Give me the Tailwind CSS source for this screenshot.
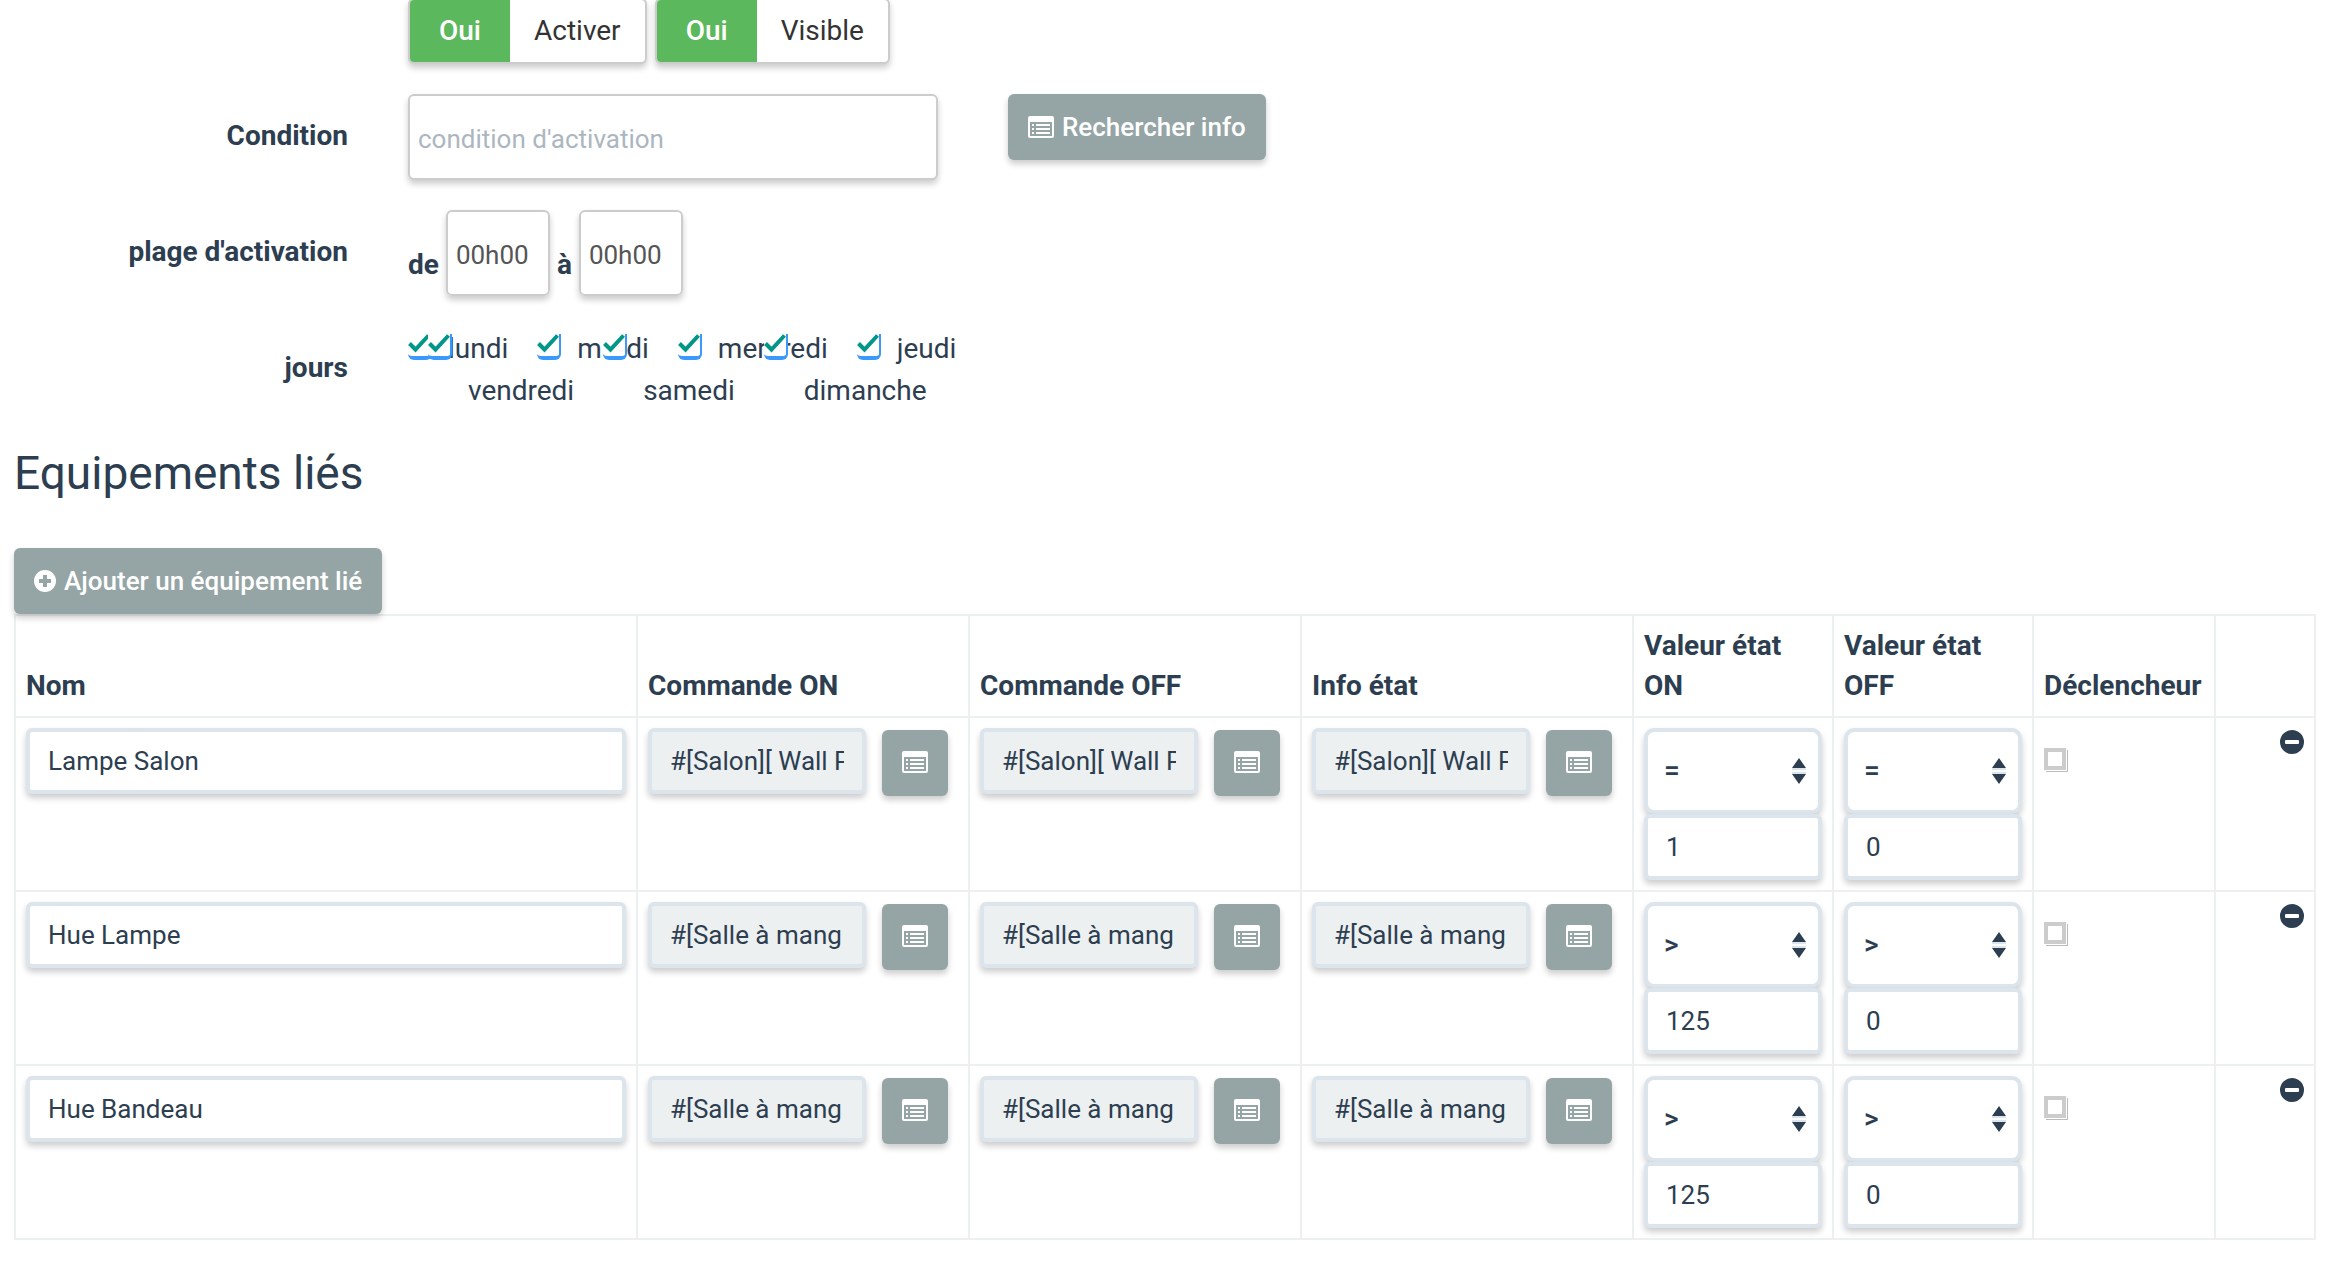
<!DOCTYPE html>
<html lang="fr">
<head>
<meta charset="utf-8">
<title>Equipements liés</title>
<script src="https://cdn.jsdelivr.net/npm/@tailwindcss/browser@4"></script>
</head>
<body class="bg-white font-['Roboto',sans-serif] text-[28px] leading-10 text-[#2c3e50] overflow-x-hidden">
<svg class="hidden" aria-hidden="true">
  <symbol id="list" viewBox="0 0 26 22"><path fill="currentColor" fill-rule="evenodd" d="M2 0H24Q26 0 26 2V20Q26 22 24 22H2Q0 22 0 20V2Q0 0 2 0ZM2 6V20H24V6ZM4 8H6V10H4ZM8 8H22V10H8ZM4 12H6V14H4ZM8 12H22V14H8ZM4 16H6V18H4ZM8 16H22V18H8Z"/></symbol>
  <symbol id="plus" viewBox="0 0 22 22"><path fill="currentColor" fill-rule="evenodd" d="M11 0A11 11 0 1 1 11 22A11 11 0 1 1 11 0ZM9 5V9H5V13H9V17H13V13H17V9H13V5Z"/></symbol>
  <symbol id="minus" viewBox="0 0 24 24"><path fill="currentColor" fill-rule="evenodd" d="M12 0A12 12 0 1 1 12 24A12 12 0 1 1 12 0ZM6 10Q5 10 5 11V13Q5 14 6 14H18Q19 14 19 13V11Q19 10 18 10Z"/></symbol>
  <symbol id="check" viewBox="0 0 24 20"><path fill="none" stroke="#009688" stroke-width="4" d="M1.500 9.500L7.500 15.500L20.500 1.500"/></symbol>
  <symbol id="sort" viewBox="0 0 14 26"><path fill="#2c3e50" d="M7 0L14 10H0ZM0 16H14L7 26Z"/><path fill="#dce4ec" d="M0 10H14V12H0ZM0 14H14V16H0Z"/></symbol>
</svg>

<main class="pl-[14px] pr-5">
  <form class="-mt-[2px] mb-9 flex flex-col gap-[30px]">
    <div class="flex gap-2 pl-[394px]">
      <button type="button" aria-pressed="true" class="flex h-[66px] overflow-hidden rounded-md border-2 border-[#ccc] bg-white leading-[62px] shadow-[0_4px_6px_rgba(0,0,0,0.2)]">
        <span class="w-[100px] bg-[#5cb85c] font-medium text-white">Oui</span><span class="px-6 text-[#333]">Activer</span>
      </button>
      <button type="button" aria-pressed="true" class="flex h-[66px] overflow-hidden rounded-md border-2 border-[#ccc] bg-white leading-[62px] shadow-[0_4px_6px_rgba(0,0,0,0.2)]">
        <span class="w-[100px] bg-[#5cb85c] font-medium text-white">Oui</span><span class="px-6 text-[#333]">Visible</span>
      </button>
    </div>

    <div class="flex items-start">
      <label for="condition" class="mr-[60px] w-[334px] pt-[22px] text-right font-bold">Condition</label>
      <input id="condition" type="text" placeholder="condition d'activation" class="mr-[70px] h-[86px] w-[530px] rounded-md border-2 border-[#ccc] bg-white px-2 pt-1 text-[26px] shadow-[0_4px_6px_rgba(0,0,0,0.2)] placeholder:text-[#acb6c0]">
      <button type="button" class="flex h-[66px] items-center gap-2 rounded-md bg-[#95a5a6] px-5 text-[26px] font-medium text-white shadow-[0_4px_6px_rgba(0,0,0,0.2)]"><svg class="h-[22px] w-[26px]"><use href="#list"/></svg>Rechercher info</button>
    </div>

    <div class="flex items-start">
      <label for="start" class="mr-[60px] w-[334px] pt-[22px] text-right font-bold">plage d'activation</label>
      <div class="flex items-center gap-[7px]">
        <label for="start" class="pt-6 font-bold">de</label>
        <input id="start" type="text" value="00h00" class="h-[86px] w-[104px] rounded-md border-2 border-[#ccc] px-2 pt-1 text-[26px] text-[#555] shadow-[0_4px_6px_rgba(0,0,0,0.2)]">
        <label for="end" class="pt-6 font-bold">à</label>
        <input id="end" type="text" value="00h00" class="h-[86px] w-[104px] rounded-md border-2 border-[#ccc] px-2 pt-1 text-[26px] text-[#555] shadow-[0_4px_6px_rgba(0,0,0,0.2)]">
      </div>
    </div>

    <fieldset class="flex items-start">
      <legend class="float-left mr-[60px] w-[334px] pt-[22px] text-right font-bold">jours</legend>
      <div id="days" class="pt-[2px] leading-[42px]"></div>
    </fieldset>
  </form>

  <h2 class="mb-[50px] text-[46px] leading-[50px]">Equipements liés</h2>
  <button type="button" class="relative flex h-[66px] items-center gap-2 rounded-md bg-[#95a5a6] px-5 text-[26px] font-medium text-white shadow-[0_4px_6px_rgba(0,0,0,0.2)]"><svg class="size-[22px]"><use href="#plus"/></svg>Ajouter un équipement lié</button>

  <table class="w-full table-fixed border-collapse border-2 border-[#ecf0f1]">
    <thead>
      <tr class="text-left align-bottom">
        <th scope="col" class="border-2 border-[#ecf0f1] p-[10px]">Nom</th>
        <th scope="col" class="w-[332px] border-2 border-[#ecf0f1] p-[10px]">Commande ON</th>
        <th scope="col" class="w-[332px] border-2 border-[#ecf0f1] p-[10px]">Commande OFF</th>
        <th scope="col" class="w-[332px] border-2 border-[#ecf0f1] p-[10px]">Info état</th>
        <th scope="col" class="w-[200px] border-2 border-[#ecf0f1] p-[10px]">Valeur état ON</th>
        <th scope="col" class="w-[200px] border-2 border-[#ecf0f1] p-[10px]">Valeur état OFF</th>
        <th scope="col" class="w-[182px] border-2 border-[#ecf0f1] p-[10px]">Déclencheur</th>
        <td class="w-[100px] border-2 border-[#ecf0f1] p-[10px]"></td>
      </tr>
    </thead>
    <tbody id="rows"></tbody>
  </table>
</main>

<script>
  const day = (name, margin, top) => `<label class="relative inline-block pl-10 ${margin}"><input type="checkbox" checked class="absolute left-0 ${top} h-[26px] w-[24px] appearance-none rounded-b-md border-r-2 border-b-4 border-[#3b99fc] bg-white"><svg class="absolute left-0 ${top} h-5 w-6"><use href="#check"/></svg>${name}</label>`;
  const upper = ['lundi', 'mardi', 'mercredi', 'jeudi'].map((n, i) => day(n, i ? 'ml-[22px]' : 'ml-0', 'top-[6px]'));
  const lower = ['vendredi', 'samedi', 'dimanche'].map((n, i) => day(n, i ? 'ml-[22px]' : 'ml-5', '-top-9'));
  document.getElementById('days').innerHTML = `<div>${upper.join(' ')}</div><div>${lower.join(' ')}</div>`;

  const command = (label, value) => `<td class="border-2 border-[#ecf0f1] p-[10px]"><div class="flex gap-4">
    <input type="text" readonly aria-label="${label}" value="${value}" class="h-[66px] w-[218px] rounded-md border-4 border-[#dce4ec] bg-[#ecf0f1] px-[18px] text-[26px] shadow-[0_4px_6px_rgba(0,0,0,0.2)]">
    <button type="button" aria-label="Rechercher ${label}" class="mt-[2px] flex size-[66px] items-center justify-center rounded-md bg-[#95a5a6] pb-[2px] text-white shadow-[0_4px_6px_rgba(0,0,0,0.2)]"><svg class="h-[22px] w-[26px]"><use href="#list"/></svg></button></div></td>`;
  const state = (label, op, value) => `<td class="border-2 border-[#ecf0f1] p-[10px]"><div class="relative">
    <select aria-label="Opérateur ${label}" class="block h-[86px] w-full appearance-none rounded-[10px] border-4 border-[#dce4ec] bg-white px-4 text-[28px] font-medium shadow-[0_4px_6px_rgba(0,0,0,0.2)]"><option>${op}</option></select>
    <svg class="pointer-events-none absolute top-[30px] right-4 h-[26px] w-[14px]"><use href="#sort"/></svg>
    <input type="text" aria-label="${label}" value="${value}" class="block h-[66px] w-full rounded-md border-4 border-[#dce4ec] bg-white px-[18px] text-[26px] shadow-[0_4px_6px_rgba(0,0,0,0.2)]"></div></td>`;
  const row = ([name, cmd, op, on, off]) => `<tr class="align-top">
    <td class="border-2 border-[#ecf0f1] p-[10px]"><input type="text" aria-label="Nom" value="${name}" class="block h-[66px] w-full rounded-md border-4 border-[#dce4ec] bg-white px-[18px] text-[26px] shadow-[0_4px_6px_rgba(0,0,0,0.2)]"></td>
    ${command('Commande ON', cmd)}${command('Commande OFF', cmd)}${command('Info état', cmd)}
    ${state('Valeur état ON', op, on)}${state('Valeur état OFF', op, off)}
    <td class="border-2 border-[#ecf0f1] p-[10px]"><input type="checkbox" aria-label="Déclencheur" class="mt-5 block size-[22px] appearance-none border-4 border-[#ccc] bg-white shadow-[1px_1px_0_#fff,2px_2px_0_#bbb]"></td>
    <td class="border-2 border-[#ecf0f1] p-[10px]"><button type="button" aria-label="Supprimer" class="mt-[2px] ml-auto block"><svg class="size-6"><use href="#minus"/></svg></button></td></tr>`;
  document.getElementById('rows').innerHTML = [
    ['Lampe Salon', '#[Salon][ Wall Plug ]', '=', '1', '0'],
    ['Hue Lampe', '#[Salle à mang', '&gt;', '125', '0'],
    ['Hue Bandeau', '#[Salle à mang', '&gt;', '125', '0'],
  ].map(row).join('');
</script>
</body>
</html>
